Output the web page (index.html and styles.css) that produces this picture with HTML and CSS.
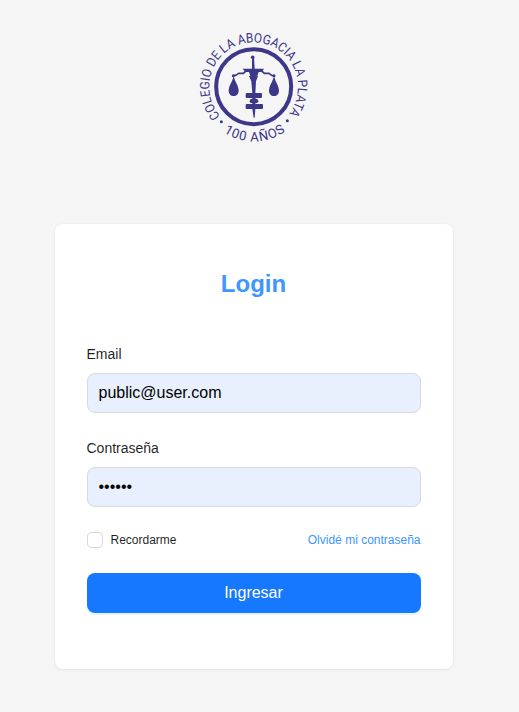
FILE: index.html
```html
<!DOCTYPE html>
<html lang="es">
<head>
<meta charset="utf-8">
<title>Login</title>
<link rel="stylesheet" href="styles.css">
</head>
<body>
<main class="page">
  <svg class="logo" viewBox="0 0 360 360" role="img" aria-label="Colegio de la Abogacia La Plata">
    <defs>
      <path id="arc-top" d="M82.2 270A133 133 0 1 1 288.2 262"/>
      <path id="arc-bottom" d="M91.5 318.8A164 164 0 0 0 279 314.5"/>
    </defs>
    <circle class="ring" cx="182" cy="182" r="112.5"/>
    <text class="seal-text" textLength="600" lengthAdjust="spacingAndGlyphs"><textPath href="#arc-top" textLength="600" lengthAdjust="spacingAndGlyphs">COLEGIO DE LA ABOGACIA LA PLATA</textPath></text>
    <text class="seal-text" textLength="197" lengthAdjust="spacing"><textPath href="#arc-bottom" textLength="197" lengthAdjust="spacing">100 AÑOS</textPath></text>
    <circle cx="85" cy="287" r="4.5"/>
    <circle cx="283" cy="284" r="4.5"/>
    <circle cx="179" cy="94" r="5.5"/>
    <path d="M177 94h6l2 34h28l-6 10h-10l-4 12h2l-6 16-2 36h-9l-3-36-7-16h4l-4-12h-11l-8-10h28z"/>
    <path class="beam" d="M120 149l8-1 9-6h14l8-7h47l8 7h14l8 6 8 1"/>
    <path d="M122 149c3 17 15 30 15 45 0 9-6 16-15 16s-15-7-15-16c0-15 12-28 15-45zM243 149c3 17 15 30 15 45 0 9-6 16-15 16s-15-7-15-16c0-15 12-28 15-45z"/>
    <circle cx="121" cy="149" r="4.5"/>
    <circle cx="243" cy="149" r="4.5"/>
    <rect x="158" y="201" width="49" height="15" rx="3"/>
    <rect x="170" y="219" width="26" height="12" rx="5"/>
    <rect x="158" y="234" width="52" height="15" rx="3"/>
    <path d="M178 210h10l-1 39-2 26h-3l-4-26z"/>
  </svg>
  <form class="card">
    <h1 class="title">Login</h1>
    <label class="label" for="email">Email</label>
    <input class="field" id="email" type="text" value="public@user.com">
    <label class="label" for="password">Contraseña</label>
    <input class="field" id="password" type="password" value="123456">
    <div class="options">
      <label class="remember"><input class="check" type="checkbox">Recordarme</label>
      <a class="forgot" href="#">Olvidé mi contraseña</a>
    </div>
    <button class="submit" type="button">Ingresar</button>
  </form>
</main>
</body>
</html>
```
FILE: styles.css
```css
* { box-sizing: border-box; }
body {
  margin: 0;
  background: #f5f5f5;
  color: rgba(0, 0, 0, .88);
  font: 14px/22px "Liberation Sans", Arial, sans-serif;
}
.page {
  display: flex;
  flex-direction: column;
  align-items: center;
  width: 507px;
  height: 712px;
  padding-top: 26px;
}
.logo { width: 120px; height: 120px; flex: none; fill: #3c3789; margin-left: -1px; }
.ring { fill: none; stroke: #3c3789; stroke-width: 12; }
.beam { fill: none; stroke: #3c3789; stroke-width: 5; stroke-linejoin: round; }
.seal-text { font: 39.5px Roboto, sans-serif; }
.card {
  display: flex;
  flex-direction: column;
  width: 398px;
  height: 445px;
  margin-top: 78px;
  padding: 44px 32px 0;
  background: #fff;
  border-radius: 8px;
  box-shadow: 0 1px 2px rgba(0, 0, 0, .03), 0 1px 6px -1px rgba(0, 0, 0, .04), 0 0 2px rgba(0, 0, 0, .05);
}
.title {
  margin: 0 0 43px;
  color: #4096ff;
  font-size: 24px;
  line-height: 32px;
  text-align: center;
}
.label { height: 22px; margin-bottom: 8px; }
.field {
  width: 100%;
  height: 40px;
  margin: 0 0 24px;
  padding: 0 11px;
  border: 1px solid #d9d9d9;
  border-radius: 8px;
  background: #e8f0fe;
  color: #000;
  font: 16px "Liberation Sans", Arial, sans-serif;
}
.options {
  display: flex;
  justify-content: space-between;
  align-items: center;
  height: 22px;
  margin-top: -2px;
  font-size: 12px;
}
.remember { display: flex; align-items: center; gap: 8px; }
.check {
  appearance: none;
  width: 16px;
  height: 16px;
  margin: 0;
  border: 1px solid #d9d9d9;
  border-radius: 4px;
  background: #fff;
}
.forgot { color: #4096ff; text-decoration: none; }
.submit {
  height: 40px;
  margin-top: 22px;
  border: 0;
  border-radius: 8px;
  background: #1677ff;
  box-shadow: 0 2px 0 rgba(5, 145, 255, .1);
  color: #fff;
  font: 16px "Liberation Sans", Arial, sans-serif;
}
```
